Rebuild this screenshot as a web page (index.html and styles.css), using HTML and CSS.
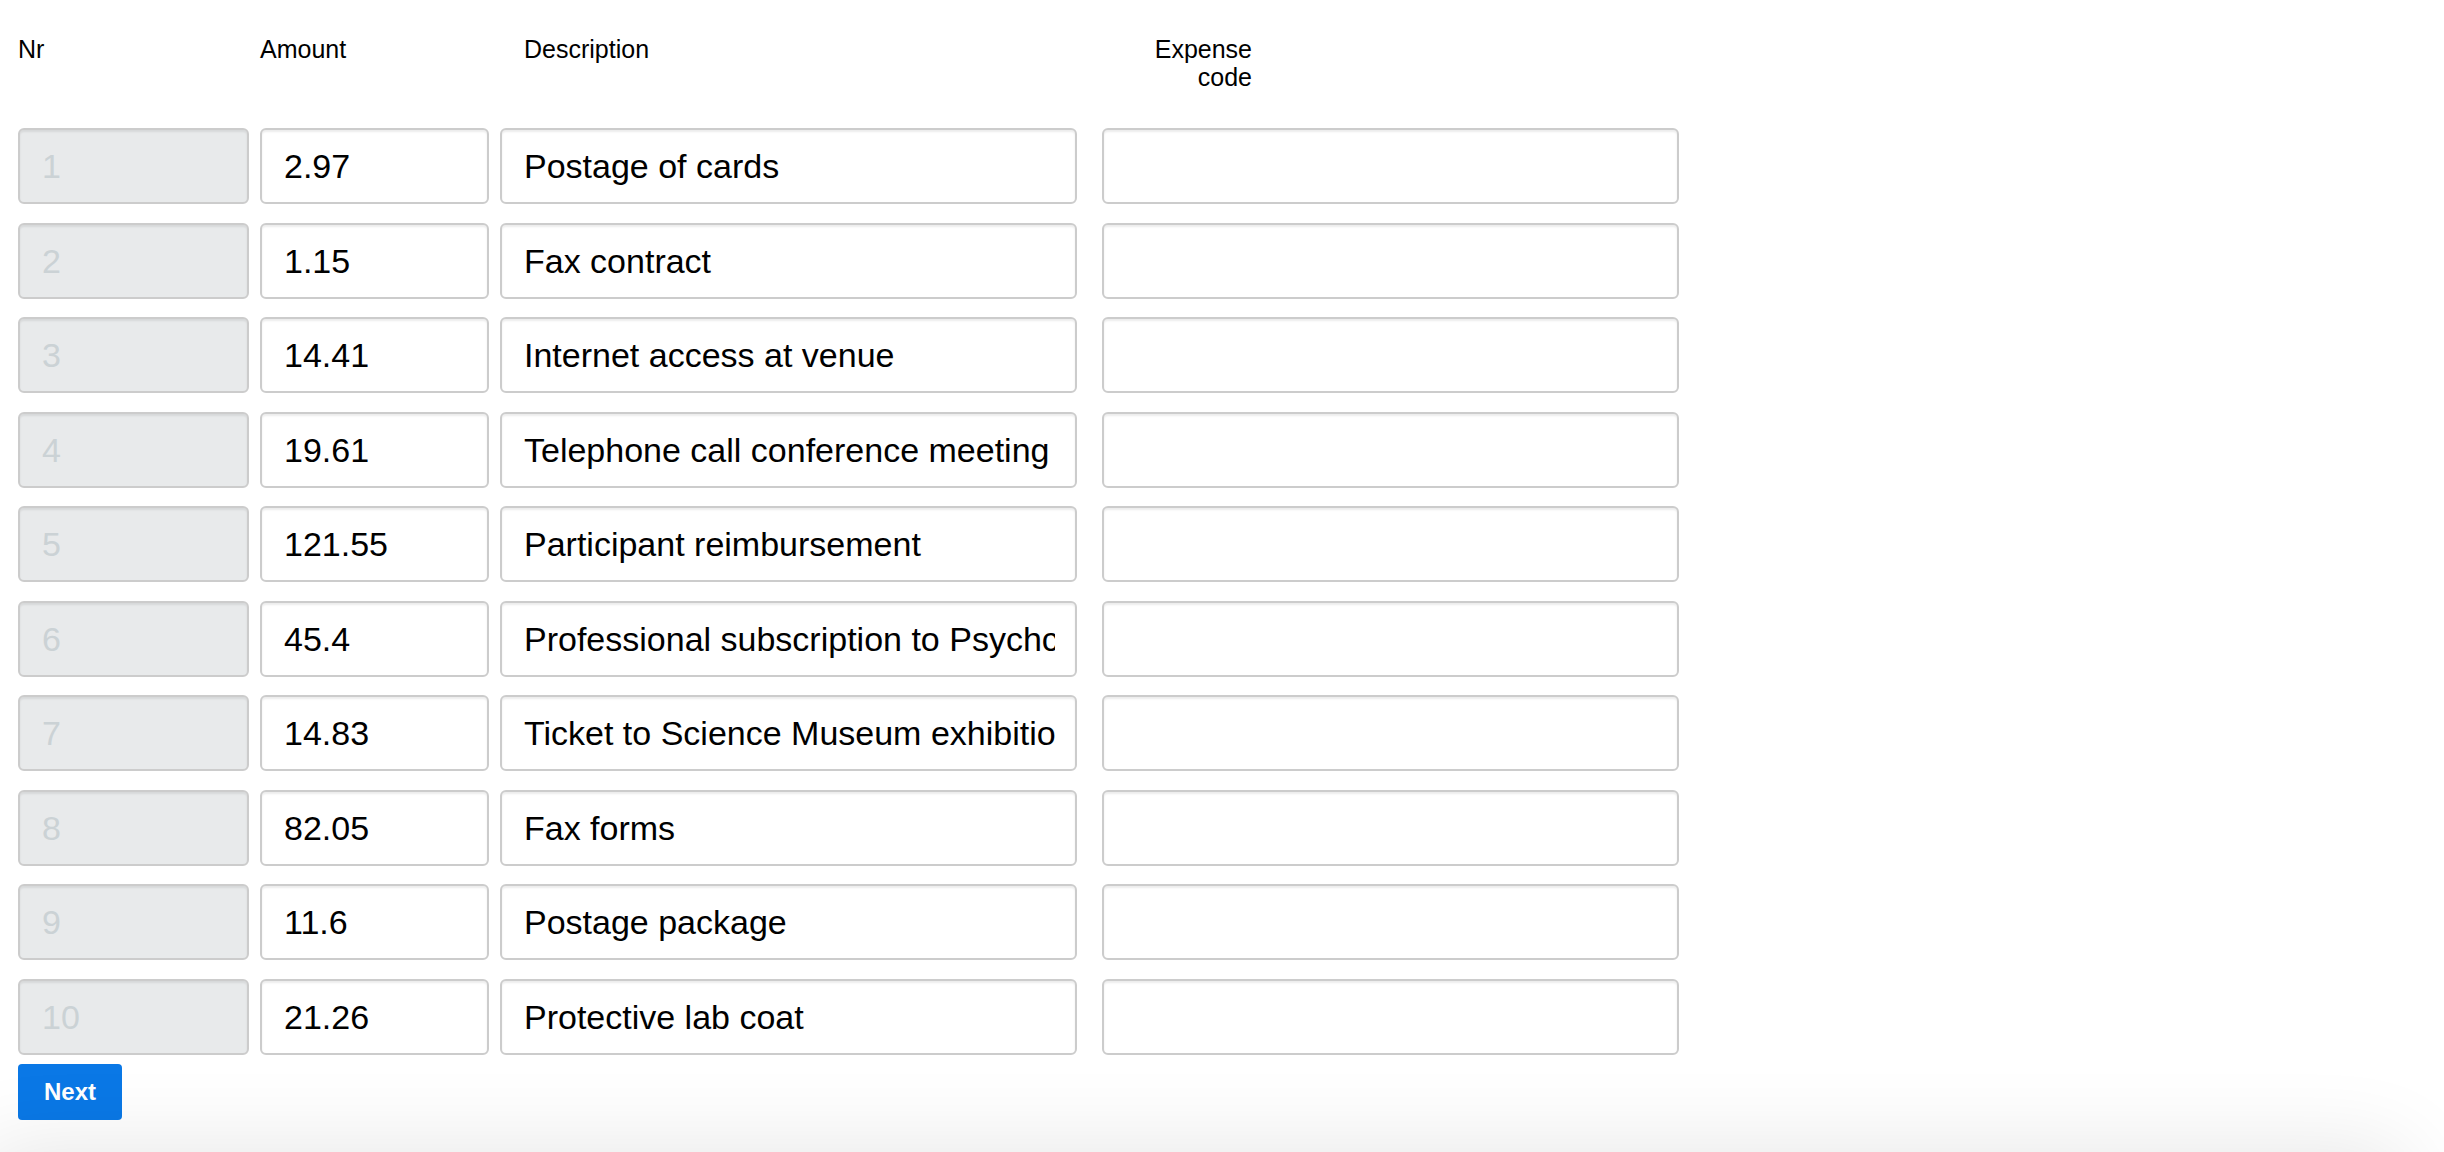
FILE: index.html
```html
<!DOCTYPE html>
<html>
<head>
<meta charset="utf-8">
<link rel="stylesheet" href="styles.css">
</head>
<body>
<div class="page">
  <div class="head">
    <div class="h-nr">Nr</div>
    <div class="h-amount">Amount</div>
    <div class="h-desc">Description</div>
    <div class="h-code">Expense code</div>
  </div>
  <div class="rows">
    <div class="row"><div class="field nr"><span class="val">1</span></div><div class="field amount"><span class="val">2.97</span></div><div class="field desc"><span class="val">Postage of cards</span></div><div class="field code"><span class="val"></span></div></div>
    <div class="row"><div class="field nr"><span class="val">2</span></div><div class="field amount"><span class="val">1.15</span></div><div class="field desc"><span class="val">Fax contract</span></div><div class="field code"><span class="val"></span></div></div>
    <div class="row"><div class="field nr"><span class="val">3</span></div><div class="field amount"><span class="val">14.41</span></div><div class="field desc"><span class="val">Internet access at venue</span></div><div class="field code"><span class="val"></span></div></div>
    <div class="row"><div class="field nr"><span class="val">4</span></div><div class="field amount"><span class="val">19.61</span></div><div class="field desc"><span class="val">Telephone call conference meeting</span></div><div class="field code"><span class="val"></span></div></div>
    <div class="row"><div class="field nr"><span class="val">5</span></div><div class="field amount"><span class="val">121.55</span></div><div class="field desc"><span class="val">Participant reimbursement</span></div><div class="field code"><span class="val"></span></div></div>
    <div class="row"><div class="field nr"><span class="val">6</span></div><div class="field amount"><span class="val">45.4</span></div><div class="field desc"><span class="val">Professional subscription to Psychc</span></div><div class="field code"><span class="val"></span></div></div>
    <div class="row"><div class="field nr"><span class="val">7</span></div><div class="field amount"><span class="val">14.83</span></div><div class="field desc"><span class="val">Ticket to Science Museum exhibitio</span></div><div class="field code"><span class="val"></span></div></div>
    <div class="row"><div class="field nr"><span class="val">8</span></div><div class="field amount"><span class="val">82.05</span></div><div class="field desc"><span class="val">Fax forms</span></div><div class="field code"><span class="val"></span></div></div>
    <div class="row"><div class="field nr"><span class="val">9</span></div><div class="field amount"><span class="val">11.6</span></div><div class="field desc"><span class="val">Postage package</span></div><div class="field code"><span class="val"></span></div></div>
    <div class="row"><div class="field nr"><span class="val">10</span></div><div class="field amount"><span class="val">21.26</span></div><div class="field desc"><span class="val">Protective lab coat</span></div><div class="field code"><span class="val"></span></div></div>
  </div>
  <button class="next" type="button">Next</button>
</div>
<div class="shade"></div>
</body>
</html>
```

FILE: styles.css
```css
html, body {
  margin: 0;
  padding: 0;
  background: #ffffff;
}

body {
  font-family: "Liberation Sans", Arial, Helvetica, sans-serif;
  color: #000000;
  overflow: hidden;
  height: 1152px;
}

.page {
  padding: 35px 0 0 18px;
}

.head {
  display: flex;
  align-items: flex-start;
  font-size: 25px;
  line-height: 28px;
  height: 56px;
}

.h-nr {
  width: 242px;
}

.h-amount {
  width: 240px;
}

.h-desc {
  width: 598px;
  padding-left: 24px;
}

.h-code {
  width: 130px;
  text-align: right;
}

.rows {
  margin-top: 37px;
  display: flex;
  flex-direction: column;
  gap: 18.5px;
}

.row {
  display: flex;
  height: 76px;
}

.field {
  box-sizing: border-box;
  height: 76px;
  border: 2px solid #cccccc;
  border-radius: 6px;
  box-shadow: inset 0 2px 2px rgba(0, 0, 0, 0.075);
  background: #ffffff;
  padding: 0 20px 0 22px;
  font-size: 34px;
  display: flex;
  align-items: center;
}

.val {
  display: block;
  flex: 1;
  min-width: 0;
  white-space: nowrap;
  overflow: hidden;
  line-height: 40px;
}

.nr {
  width: 231px;
  margin-right: 11px;
  background: #e8eaeb;
  color: #cbd2d5;
}

.amount {
  width: 229px;
  margin-right: 11px;
}

.desc {
  width: 577px;
  margin-right: 25px;
}

.code {
  width: 577px;
}

.next {
  display: block;
  margin-top: 9.5px;
  width: 104px;
  height: 56px;
  border: none;
  border-radius: 4px;
  background: #0a78e6;
  color: #ffffff;
  font-family: "Liberation Sans", Arial, Helvetica, sans-serif;
  font-size: 24px;
  font-weight: bold;
  padding: 0;
}

.shade {
  position: fixed;
  left: -20px;
  right: 40px;
  top: 1152px;
  height: 200px;
  box-shadow: 0 0 90px rgba(0, 0, 0, 0.11);
  background: #eeeeee;
}
```
